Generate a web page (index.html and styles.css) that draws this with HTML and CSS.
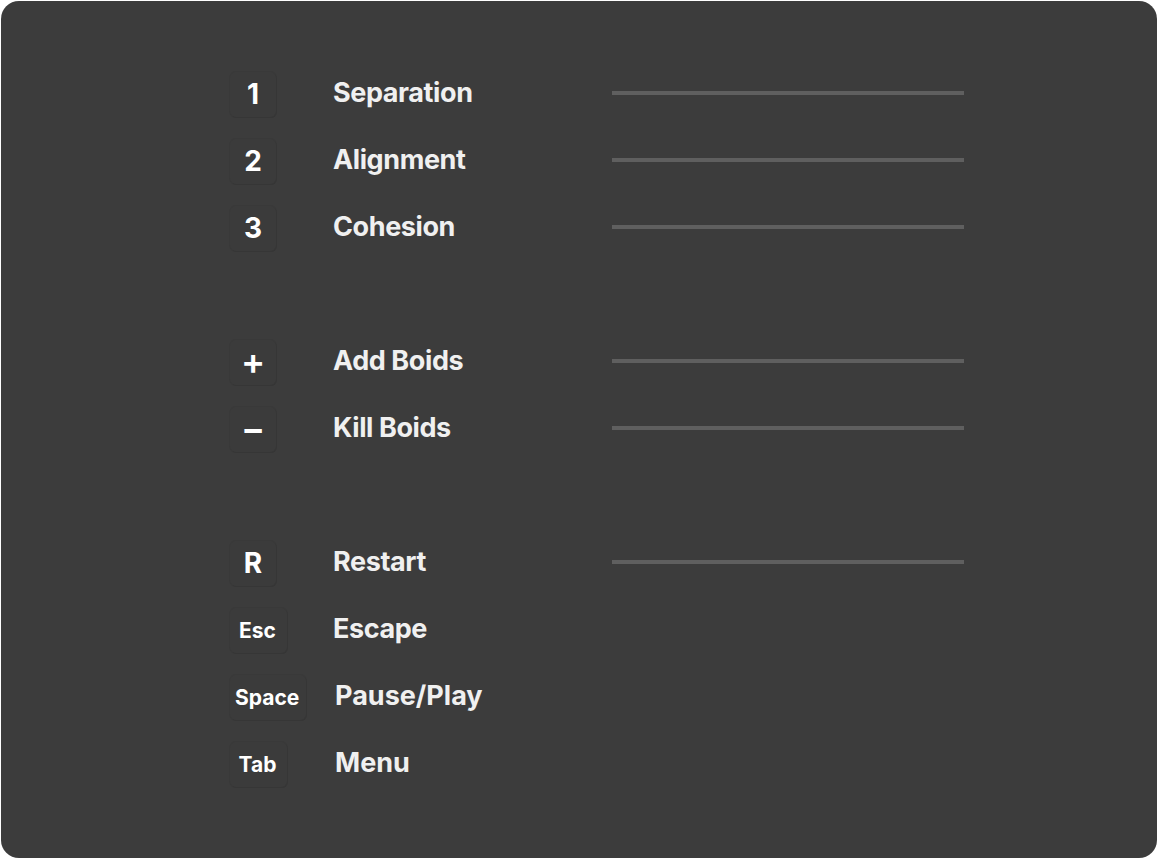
FILE: index.html
```html
<!DOCTYPE html>
<html>
<head>
<meta charset="utf-8">
<link rel="stylesheet" href="styles.css">
</head>
<body>
<div class="panel">
  <div class="grid">
    <div class="key">1</div><div class="label">Separation</div><div class="slider"></div>
    <div class="key">2</div><div class="label">Alignment</div><div class="slider"></div>
    <div class="key">3</div><div class="label">Cohesion</div><div class="slider"></div>
    <div class="spacer"></div>
    <div class="key sym">+</div><div class="label">Add Boids</div><div class="slider"></div>
    <div class="key sym">−</div><div class="label">Kill Boids</div><div class="slider"></div>
    <div class="spacer"></div>
    <div class="key">R</div><div class="label">Restart</div><div class="slider"></div>
    <div class="key small">Esc</div><div class="label">Escape</div><div></div>
    <div class="key small">Space</div><div class="label shift">Pause/Play</div><div></div>
    <div class="key small">Tab</div><div class="label shift">Menu</div><div></div>
  </div>
</div>
</body>
</html>
```
FILE: styles.css
```css
html, body {
  margin: 0;
  padding: 0;
  background: #ffffff;
}
body {
  padding: 1px;
  font-family: "Inter", "Liberation Sans", sans-serif;
}
.panel {
  width: 1156px;
  height: 857px;
  box-sizing: border-box;
  background: #3c3c3c;
  border-radius: 18px;
  padding: 70px 0 0 229px;
}
.grid {
  display: grid;
  grid-template-columns: 103px 279px 352px;
  grid-auto-rows: 46px;
  row-gap: 21px;
  align-items: center;
}
.spacer {
  grid-column: 1 / -1;
}
.key {
  justify-self: start;
  min-width: 46px;
  height: 45px;
  box-sizing: border-box;
  padding: 0 7px;
  display: flex;
  align-items: center;
  justify-content: center;
  background: #3b3b3b;
  border-radius: 6px;
  box-shadow: 1px 1px 0 #363636, 0 0 0 1px #393939;
  color: #ffffff;
  font-size: 28px;
  font-weight: 700;
}
.key.sym {
  font-size: 36px;
  font-weight: 600;
  padding-bottom: 3px;
}
.key.small {
  min-width: 57px;
  font-size: 21px;
  padding: 0 7px 0 5px;
}
.label {
  color: #f0f0f0;
  font-size: 27px;
  font-weight: 700;
  letter-spacing: -0.4px;
  margin-top: -4px;
}
.label.shift {
  margin-left: 2px;
  letter-spacing: 0;
}
.slider {
  height: 4px;
  background: #5f5f5f;
  margin-top: -3px;
}
```
